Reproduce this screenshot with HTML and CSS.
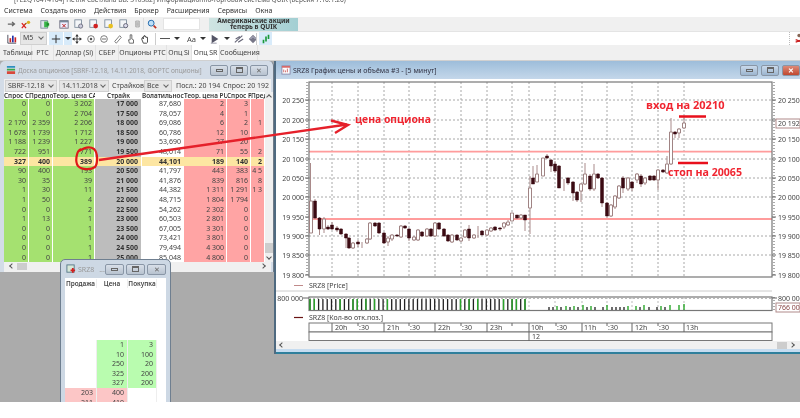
FILE: index.html
```html
<!DOCTYPE html>
<html lang="ru">
<head>
<meta charset="utf-8">
<title>QUIK</title>
<link rel="stylesheet" href="styles.css">
</head>
<body>
<div class="app">
  <div class="apptitle"><span>[FE2Q16414164] Петля Светлана BB. 310382] Информационно-торговая система QUIK (версия 7.16.1.26)</span></div>
  <nav class="menu"><span>Система</span><span>Создать окно</span><span>Действия</span><span>Брокер</span><span>Расширения</span><span>Сервисы</span><span>Окна</span></nav>

  <div class="tb tb1">
    <div class="tgroup g1">
      <svg class="ic" viewBox="0 0 12 12"><path d="M1 6h7M6 3.500 9 6 6 8.500" fill="none" stroke="#666" stroke-width="1.500"/></svg>
      <svg class="ic" viewBox="0 0 12 12"><path d="M1 5l5 6M6 5l-5 6" stroke="#d22" stroke-width="1.600"/><circle cx="9" cy="4" r="2" fill="#d8b020"/><path d="M7 5 4 7" stroke="#9a7a10"/></svg>
    </div>
    <div class="tgroup">
      <svg class="ic" viewBox="0 0 12 12"><rect x="1" y="2" width="8" height="9" fill="#dfe6ea" stroke="#789"/><path d="M5 3h5v7H5z" fill="#39b54a"/><path d="M8 5h3v3H8z" fill="#1a8a2a"/></svg>
    </div>
    <div class="tgroup g6">
      <svg class="ic" viewBox="0 0 12 12"><rect x="1" y="2" width="10" height="9" fill="#eef" stroke="#667"/><path d="M1 2h10v2H1z" fill="#789"/><path d="M4 6l4 4M8 6l-4 4" stroke="#b22" stroke-width="1.200"/></svg>
      <svg class="ic" viewBox="0 0 12 12"><rect x="1" y="1" width="8" height="9" fill="#f4f6f8" stroke="#789"/><circle cx="8" cy="8.500" r="2.500" fill="#ccd" stroke="#667"/></svg>
      <svg class="ic" viewBox="0 0 12 12"><rect x="1" y="1" width="8" height="9" fill="#f4f6f8" stroke="#789"/><circle cx="8" cy="8.500" r="2.800" fill="#d02020"/></svg>
      <svg class="ic" viewBox="0 0 12 12"><rect x="1" y="1" width="8" height="9" fill="#f4f6f8" stroke="#789"/><circle cx="8" cy="8.500" r="2.800" fill="#e8c020"/></svg>
      <svg class="ic" viewBox="0 0 12 12"><rect x="1" y="1" width="8" height="9" fill="#f4f6f8" stroke="#789"/><circle cx="8" cy="8" r="2.500" fill="#dde" stroke="#556"/></svg>
      <svg class="ic ic-n" viewBox="0 0 12 12"><path d="M3 1h6v10H3z" fill="#eee" stroke="#777"/><path d="M4 4h4M4 6h4M4 8h4" stroke="#777"/></svg>
    </div>
    <div class="tgroup g-s">
      <svg class="ic" viewBox="0 0 12 12"><circle cx="5" cy="5" r="3.500" fill="#bfe0f8" stroke="#2a6fb0" stroke-width="1.200"/><path d="M8 8l3 3" stroke="#c03020" stroke-width="2"/></svg>
      <div class="findbox"></div>
    </div>
    <div class="banner"><span>Американские акции</span><span>теперь в QUIK</span></div>
  </div>

  <div class="tb tb2">
    <svg class="ic chartic" viewBox="0 0 12 12"><path d="M1 1v10h10" fill="none" stroke="#334"/><rect x="3" y="5" width="2" height="5" fill="#c22"/><rect x="6" y="2" width="2" height="8" fill="#23a"/><rect x="9" y="4" width="2" height="6" fill="#c22"/></svg>
    <div class="combo small">M5<i class="chev"></i></div>
    <div class="hl cross"><svg class="ic" viewBox="0 0 12 12"><path d="M6 1v10M1 6h10" stroke="#333" stroke-width="1.200"/></svg></div>
    <div class="hl drop"><i class="tri"></i></div>
    <div class="tools">
      <svg class="ic" viewBox="0 0 12 12"><path d="M6 0 8 3H4zM6 12 4 9h4zM0 6l3-2v4zM12 6 9 4v4z" fill="#333"/><path d="M6 2v8M2 6h8" stroke="#333"/></svg>
      <svg class="ic" viewBox="0 0 12 12"><circle cx="6" cy="6" r="4" fill="none" stroke="#666"/><circle cx="6" cy="6" r="1.500" fill="#555"/></svg>
      <svg class="ic" viewBox="0 0 12 12"><circle cx="6" cy="6" r="4" fill="none" stroke="#666"/><path d="M3.500 6h5" stroke="#555"/></svg>
      <svg class="ic" viewBox="0 0 12 12"><path d="M2 9 8 2l2 2-6 7z" fill="#fff" stroke="#666"/></svg>
      <svg class="ic" viewBox="0 0 12 12"><path d="M5 1h2v5l2 1v4H4L3 7h2z" fill="#fff" stroke="#555"/></svg>
      <svg class="ic" viewBox="0 0 12 12"><path d="M2 6l1-2 1 2V3h1V2h1v1h1v1h2v6l-1 1H4z" fill="#fff" stroke="#333"/></svg>
    </div>
    <b class="sep"></b>
    <div class="tools2">
      <span class="dash"></span><i class="tri"></i>
      <span class="aa">Aa</span><i class="tri"></i>
      <svg class="ic" viewBox="0 0 12 12"><path d="M2 1l8 5-8 5z" fill="#556"/><path d="M1 11h7" stroke="#889"/></svg><i class="tri"></i>
      <svg class="ic" viewBox="0 0 12 12"><path d="M1 10 10 2M2 6l5-3M5 10l6-4" stroke="#667" stroke-width="1.400"/></svg>
      <svg class="ic" viewBox="0 0 12 12"><path d="M6 1l5 5-5 5-5-5z" fill="#778"/><path d="M3 6l3-3 3 3" fill="none" stroke="#ccd"/></svg>
    </div>
    <b class="sep"></b>
    <div class="hl greenbtn"><svg class="ic" viewBox="0 0 12 12"><path d="M2 7h2v4H2zM5 3h2v6H5zM8 1h2v5H8z" fill="#1c9a3a"/></svg></div>
    <div class="tb-end"><svg class="ic" viewBox="0 0 12 12"><circle cx="6" cy="3" r="2" fill="#865"/><path d="M2 8l8 3M10 8l-8 3" stroke="#c22" stroke-width="1.500"/></svg></div>
  </div>

  <div class="tabs">
    <span class="tab t1">Таблицы</span><span class="tab t2">РТС</span><span class="tab t3">Доллар (Si)</span><span class="tab t4">СБЕР</span><span class="tab t5">Опционы РТС</span><span class="tab t6">Опц Si</span><span class="tab on t7">Опц SR</span><span class="tab t8">Сообщения</span>
  </div>

  <main class="mdi">
    <section class="win boardwin">
      <header class="wtitle">
        <svg class="wic" viewBox="0 0 11 11"><path d="M1 1h9v2H1z" fill="#2d8fc0"/><path d="M1 4h9v2H1z" fill="#3aa648"/><path d="M1 7h9v3H1z" fill="#d8483a"/></svg>
        <span class="wname bname">Доска опционов [SBRF-12.18, 14.11.2018, ФОРТС опционы]</span>
        <div class="wbtns"><i class="wb"><u class="mn"></u></i><i class="wb"><u class="mx"></u></i><i class="wb"><u class="cl">✕</u></i></div>
      </header>
      <div class="boardbody">
        <div class="filters">
          <div class="combo c1">SBRF-12.18<i class="chev"></i></div>
          <div class="combo c2">14.11.2018<i class="chev"></i></div>
          <span class="lab lab-s">Страйков:</span>
          <div class="combo c3">Все<i class="chev"></i></div>
          <span class="lab lab-a">Посл.: 20 194</span>
          <span class="lab lab-b">Спрос: 20 192</span>
        </div>
        <div class="gridwrap">
          <div class="grid">
            <div class="row head"><span>Спрос С/</span><span>Предлож</span><span>Теор. цена CAL</span><span class="hc">Страйк</span><span>Волатильность</span><span>Теор. цена PUT</span><span>Спрос Р</span><span>Пред</span></div>
            <div class="row"><span>0</span><span>0</span><span>3 202</span><span>17 000</span><span>87,680</span><span>2</span><span>3</span><span></span></div>
            <div class="row"><span>0</span><span>0</span><span>2 704</span><span>17 500</span><span>78,057</span><span>4</span><span>1</span><span></span></div>
            <div class="row"><span>2 170</span><span>2 359</span><span>2 206</span><span>18 000</span><span>69,086</span><span>6</span><span>2</span><span>1</span></div>
            <div class="row"><span>1 678</span><span>1 739</span><span>1 712</span><span>18 500</span><span>60,786</span><span>12</span><span>10</span><span></span></div>
            <div class="row"><span>1 188</span><span>1 239</span><span>1 227</span><span>19 000</span><span>53,690</span><span>27</span><span>20</span><span></span></div>
            <div class="row"><span>722</span><span>951</span><span>771</span><span>19 500</span><span>48,014</span><span>71</span><span>55</span><span>2</span></div>
            <div class="row cur"><span>327</span><span>400</span><span>389</span><span>20 000</span><span>44,101</span><span>189</span><span>140</span><span>2</span></div>
            <div class="row"><span>90</span><span>400</span><span>193</span><span>20 500</span><span>41,797</span><span>443</span><span>383</span><span>4 5</span></div>
            <div class="row"><span>30</span><span>35</span><span>39</span><span>21 000</span><span>41,876</span><span>839</span><span>816</span><span>8</span></div>
            <div class="row"><span>1</span><span>30</span><span>11</span><span>21 500</span><span>44,382</span><span>1 311</span><span>1 291</span><span>1 3</span></div>
            <div class="row"><span>1</span><span>50</span><span>4</span><span>22 000</span><span>48,715</span><span>1 804</span><span>1 794</span><span></span></div>
            <div class="row"><span>0</span><span>0</span><span>2</span><span>22 500</span><span>54,262</span><span>2 302</span><span>0</span><span></span></div>
            <div class="row"><span>1</span><span>13</span><span>1</span><span>23 000</span><span>60,503</span><span>2 801</span><span>0</span><span></span></div>
            <div class="row"><span>0</span><span>0</span><span>1</span><span>23 500</span><span>67,005</span><span>3 301</span><span>0</span><span></span></div>
            <div class="row"><span>0</span><span>0</span><span>1</span><span>24 000</span><span>73,421</span><span>3 801</span><span>0</span><span></span></div>
            <div class="row"><span>0</span><span>0</span><span>1</span><span>24 500</span><span>79,494</span><span>4 300</span><span>0</span><span></span></div>
            <div class="row"><span>0</span><span>0</span><span>1</span><span>25 000</span><span>85,048</span><span>4 800</span><span>0</span><span></span></div>
          </div>
          <div class="vscroll"><i class="up"></i><i class="thumb"></i><i class="down"></i></div>
        </div>
        <div class="hscroll"><i class="left"></i><i class="hthumb"></i><i class="right"></i></div>
      </div>
    </section>

    <section class="win bookwin">
      <header class="wtitle btitle">
        <svg class="wic" viewBox="0 0 11 11"><rect x="1" y="1" width="8" height="8" fill="#d8e8d8" stroke="#578"/><path d="M5 7h5M7.500 4.500v5" stroke="#d02020" stroke-width="2"/></svg>
        <span class="wname">SRZ8</span><span class="wname more">...</span>
        <div class="wbtns"><i class="wb b2"><u class="mn"></u></i><i class="wb b2"><u class="mx"></u></i><i class="wb b2"><u class="cl">✕</u></i></div>
      </header>
      <div class="book">
        <div class="brow bhead"><span>Продажа</span><span>Цена</span><span>Покупка</span></div>
        <div class="bspace"></div>
        <div class="brow"><span></span><span class="g">1</span><span class="g">3</span></div>
        <div class="brow"><span></span><span class="g">10</span><span class="g">100</span></div>
        <div class="brow"><span></span><span class="g">250</span><span class="g">20</span></div>
        <div class="brow"><span></span><span class="g">325</span><span class="g">200</span></div>
        <div class="brow"><span></span><span class="g">327</span><span class="g">200</span></div>
        <div class="brow"><span class="p">203</span><span class="p">400</span><span></span></div>
        <div class="brow"><span class="p">211</span><span class="p">410</span><span></span></div>
      </div>
    </section>

    <section class="win chartwin">
      <header class="wtitle ctitle">
        <svg class="wic" viewBox="0 0 11 11"><rect x="1" y="1" width="9" height="9" fill="#fff" stroke="#88a"/><path d="M1 1h9v2H1z" fill="#d86a6a"/><path d="M3 8V5M5 8V6M7 8V4" stroke="#c66"/></svg>
        <span class="wname">SRZ8 График цены и объёма #3 - [5 минут]</span>
        <div class="wbtns cbtns"><i class="wb c"><u class="mn"></u></i><i class="wb c"><u class="mx"></u></i><i class="wb c close"><u class="cl">✕</u></i></div>
      </header>
      <svg class="plot" viewBox="276 78 524 262" width="524" height="262">
        <g class="grid-l">
          <path d="M309 99H772M309 119H772M309 138H772M309 158H772M309 177H772M309 196H772M309 235H772M309 254H772"/>
          <path d="M332 81V276M358 81V276M384 81V276M409 81V276M435 81V276M461 81V276M487 81V276M512 81V276M529 81V276M555 81V276M582 81V276M607 81V276M632 81V276M658 81V276M684 81V276"/>
        </g>
        <path class="level" d="M309 150.700H772M309 218H772"/>
        <rect class="frame" x="309" y="81" width="463" height="195"/>
        <path class="ticks" d="M307 81V276M774 81V276"/>
        <path class="tick2" d="M305 99h4M305 119h4M305 138h4M305 158h4M305 177h4M305 196h4M305 216h4M305 235h4M305 254h4M305 274h4M772 99h4M772 119h4M772 138h4M772 158h4M772 177h4M772 196h4M772 216h4M772 235h4M772 254h4M772 274h4"/>
        <g class="ylab">
          <text x="304" y="101.500">20 250</text><text x="304" y="121.500">20 200</text><text x="304" y="140.500">20 150</text><text x="304" y="160.500">20 100</text><text x="304" y="179.500">20 050</text><text x="304" y="198.500">20 000</text><text x="304" y="218.500">19 950</text><text x="304" y="237.500">19 900</text><text x="304" y="256.500">19 850</text><text x="304" y="276.500">19 800</text>
        </g>
        <g class="ylab r">
          <text x="778" y="101.500">20 250</text><text x="778" y="140.500">20 150</text><text x="778" y="160.500">20 100</text><text x="778" y="179.500">20 050</text><text x="778" y="198.500">20 000</text><text x="778" y="218.500">19 950</text><text x="778" y="237.500">19 900</text><text x="778" y="256.500">19 850</text><text x="778" y="276.500">19 800</text>
        </g>
        <rect class="pricebox" x="776" y="118" width="24" height="9"/>
        <text class="ybox" x="778" y="125">20 192</text>

        <path class="wick" d="M310.500 162V232M315 198V218M319.500 216V234M324 216V232M328 224V229M332 221V229M337 225V231M341 227V234M346 232V247M349 236V248M353 241V248M358 239V246M362 241V247M367 237V243M370 221V239M375 221V226M379 221V233M384 231V243M388 235V245M392 233V240M397 233V236M401 224V237M405 224V228M409 227V240M414 235V240M418 228V240M422 230V236M427 227V236M431 227V236M435 221V236M439 221V229M444 227V236M448 233V241M452 233V242M457 233V240M461 236V241M465 228V237M469 224V240M474 233V238M478 225V237M482 229V234M487 228V235M491 226V231M495 225V230M500 226V230M504 221V228M508 219V225M512 212V220M517 214V218M521 213V218M525 214V230M530 175V233M533 165V183M537 164V181M543 157V175M547 153V158M551 158V171M555 160V172M559 164V187M564 178V190M568 176V184M573 180V200M577 190V201M581 182V201M585 162V184M590 173V190M594 163V190M598 172V178M602 176V206M607 201V217M611 203V216M615 194V208M619 184V198M623 175V192M628 176V190M632 180V190M637 172V182M641 173V186M645 176V184M650 174V180M654 174V180M658 168V189M663 168V172M667 155V173M671 117V164M675 130V137M679 127V137M684 115V128"/>
        <path class="hollow" d="M309.500 200h3v32h-3zM322.500 218h3v10h-3zM351.500 242h3v5h-3zM365.500 238h3v4h-3zM368.500 222h3v16h-3zM386.500 237h3v4h-3zM390.500 234h3v4h-3zM399.500 225h3v11h-3zM412.500 236h3v3h-3zM416.500 229h3v10h-3zM425.500 228h3v7h-3zM433.500 222h3v13h-3zM450.500 234h3v7h-3zM459.500 237h3v3h-3zM463.500 229h3v7h-3zM472.500 234h3v3h-3zM485.500 229h3v5h-3zM489.500 227h3v3h-3zM502.500 222h3v4h-3zM506.500 221h3v3h-3zM510.500 212h3v8h-3zM519.500 214h3v3h-3zM528.500 187h3v20h-3zM535.500 173h3v8h-3zM541.500 157h3v18h-3zM579.500 183h3v7h-3zM583.500 173h3v10h-3zM592.500 173h3v15h-3zM609.500 204h3v11h-3zM613.500 195h3v11h-3zM617.500 185h3v12h-3zM626.500 177h3v11h-3zM635.500 173h3v6h-3zM643.500 177h3v5h-3zM656.500 169h3v10h-3zM665.500 163h3v9h-3zM669.500 131h3v32h-3zM677.500 128h3v4h-3zM682.500 122h3v5h-3z"/>
        <path class="dark" d="M313.500 200h3v17h-3zM318 217h3v11h-3zM326.500 226h3v2h-3zM330.500 224h3v4h-3zM335.500 227h3v2h-3zM339.500 228h3v5h-3zM344.500 233h3v4h-3zM347.500 237h3v10h-3zM356.500 241h3v2h-3zM373.500 222h3v3h-3zM377.500 222h3v10h-3zM382.500 232h3v10h-3zM395.500 234h3v1h-3zM403.500 225h3v2h-3zM407.500 228h3v9h-3zM420.500 231h3v4h-3zM429.500 228h3v7h-3zM437.500 222h3v6h-3zM442.500 228h3v7h-3zM446.500 234h3v6h-3zM455.500 234h3v5h-3zM467.500 228h3v9h-3zM480.500 230h3v4h-3zM493.500 226h3v3h-3zM498.500 227h3v1h-3zM515.500 214h3v3h-3zM523.500 214h3v5h-3zM531.500 177h3v6h-3zM545.500 155h3v2h-3zM549.500 159h3v6h-3zM553.500 163h3v7h-3zM557.500 165h3v22h-3zM566.500 177h3v5h-3zM571.500 181h3v11h-3zM575.500 191h3v8h-3zM588.500 175h3v13h-3zM596.500 173h3v4h-3zM600.500 177h3v25h-3zM605.500 202h3v13h-3zM621.500 177h3v10h-3zM630.500 181h3v6h-3zM639.500 175h3v8h-3zM648.500 175h3v4h-3zM652.500 175h3v4h-3zM661.500 169h3v2h-3zM673.500 131h3v2h-3z"/>

        <path class="sepl" d="M276 290H772"/>
        <g class="leg"><path class="l1" d="M294 284.500h9"/><text x="309" y="287">SRZ8 [Price]</text></g>
        <rect class="frame" x="309" y="296" width="463" height="13.500"/>
        <path class="grid-d" d="M332 296V309M358 296V309M384 296V309M409 296V309M435 296V309M461 296V309M487 296V309M512 296V309M529 296V309M555 296V309M582 296V309M607 296V309M632 296V309M658 296V309M684 296V309M309 297.500H772"/>
        <path class="vol" d="M310 298V309M314.300 298V309M318.600 298V309M322.900 298V309M327.200 298V309M331.500 298V309M335.800 298V309M340.100 298V309M344.400 298V309M348.700 298V309M353 298V309M357.300 298V309M361.600 298V309M365.900 298V309M370.200 298V309M374.500 298V309M378.800 298V309M383.100 298V309M387.400 298V309M391.700 298V309M396 298V309M400.300 298V309M404.600 298V309M408.900 298V309M413.200 298V309M417.500 298V309M421.800 298V309M426.100 298V309M430.400 298V309M434.700 298V309M439 298V309M443.300 298V309M447.600 298V309M451.900 298V309M456.200 298V309M460.500 298V309M464.800 298V309M469.100 298V309M473.400 298V309M477.700 298V309M482 298V309M486.300 298V309M490.600 298V309M494.900 298V309M499.200 298V309M503.500 298V309M507.800 298V309M512.100 298V309M516.400 298V309M520.700 298V309M525 298V309M549 306V309M553 306V309M561 306V309M570 306V309M578 306V309M587 306V309M595 306V309M603 306V309M612 306V309M616 306V309M620 306V309M624 306V309M640 306V309M649 306V309M657 306V309M665 306V309"/>
        <path class="volg" d="M310 298V309M314.300 298V309M340.100 298V309M353 298V309M357.300 298V309M365.900 298V309M374.500 298V309M387.400 298V309M460.500 298V309M469.100 298V309M477.700 298V309M503.500 298V309M512.100 298V309M516.400 298V309M525 298V309M557 305V309M566 305V309M574 305V309M583 304V309M591 305V309M607 304V309M628 305V309M636 305V309M644 304V309M661 305V309M670 304V309M679 304V309M684 303V309"/>
        <text class="volt" x="303" y="300">800 000</text>
        <path class="tick2" d="M303 297h6M772 297h5"/>
        <path class="ticks" d="M774 296V309"/>
        <text class="ylab2" x="778" y="300">800 000</text>
        <rect class="pricebox vb" x="776" y="302" width="24" height="9"/>
        <text class="ybox vt" x="778" y="309">766 000</text>
        <g class="leg"><path class="l2" d="M294 316.500h9"/><text x="309" y="319">SRZ8 [Кол-во отк.поз.]</text></g>

        <rect class="axis" x="309" y="322" width="463" height="9"/>
        <rect class="axis" x="309" y="331" width="463" height="8.500"/>
        <path class="axsep" d="M332 322v9M384 322v9M435 322v9M487 322v9M529 322v18M582 322v9M632 322v9M684 322v9"/>
        <path class="axtick" d="M358 322v3M409 322v3M461 322v3M512 322v3M556 322v3M607 322v3M658 322v3"/>
        <g class="tlab">
          <text x="335" y="329">20h</text><text x="359" y="329">:30</text><text x="387" y="329">21h</text><text x="410" y="329">:30</text><text x="438" y="329">22h</text><text x="462" y="329">:30</text><text x="490" y="329">23h</text><text x="531" y="329">10h</text><text x="557" y="329">:30</text><text x="584" y="329">11h</text><text x="608" y="329">:30</text><text x="635" y="329">12h</text><text x="659" y="329">:30</text><text x="686" y="329">13h</text><text x="532" y="338">12</text>
        </g>
      </svg>
      <div class="chartscroll"><i class="left"></i><i class="hthumb2"></i><i class="right"></i></div>
    </section>
  </main>
  <div class="foot"></div>

  <svg class="notes" viewBox="0 0 800 418" width="800" height="418">
    <path class="ring" d="M81 149C76 151 75 162 78 166 82 170 91 170 95 167 98 163 98 153 94 149 90 146 85 147 79 151"/>
    <path class="arrow" d="M99 160 347 124.500M331 120.500 348 125 335 133"/>
    <text class="note" x="355" y="123">цена опциона</text>
    <text class="note n2" x="646" y="109">вход на 20210</text>
    <text class="note n3" x="668" y="175.500">стоп на 20065</text>
    <path class="mark" d="M679 116.500h27M678 163h30"/>
  </svg>
</div>
</body>
</html>
```
FILE: styles.css
```css
* { box-sizing: border-box; }
html, body { margin: 0; padding: 0; background: #fff; }
body { font-family: "Noto Sans", "Open Sans", sans-serif; color: #333; }

.app { width: 800px; height: 418px; overflow: hidden; position: relative; display: flex; flex-direction: column; filter: blur(0.55px); background: #fff; }

.apptitle { height: 4px; overflow: hidden; position: relative; font-size: 6.600px; line-height: 8px; color: #555; }
.apptitle span { position: absolute; left: 14px; top: -4px; white-space: nowrap; }

.menu { height: 13px; display: flex; gap: 8px; padding-left: 4px; font-size: 7px; line-height: 13px; color: #333; align-items: center; flex: none; }

.tb { display: flex; align-items: center; flex: none; }
.tb1 { height: 15px; background: #f0f0f0; padding-left: 7px; border-bottom: 1px solid #e4e4e4; }
.tb2 { height: 13px; background: #fff; padding-left: 7px; position: relative; }
.ic { width: 10px; height: 10px; flex: none; display: block; }
.ic-n { width: 7px; }
.tgroup { display: flex; gap: 4px; align-items: center; padding-right: 9px; }
.g6 { gap: 5px; padding-right: 2px; }
.g-s { gap: 6px; border-left: 1px solid #ddd; padding-left: 3px; padding-right: 0; }
.findbox { width: 37px; height: 12px; background: #fff; border: 1px solid #e4e4e4; }
.banner { margin-left: 9px; width: 89px; height: 13px; background: linear-gradient(90deg, #cfe4e2, #a3cfd3); display: flex; flex-direction: column; align-items: center; font-size: 6.500px; line-height: 6.500px; font-weight: 700; color: #333; }

.chartic { margin-right: 3px; }
.combo { height: 12px; background: #e6e6e6; border: 1px solid #d0d0d0; font-size: 7px; line-height: 10px; padding-left: 2px; position: relative; color: #444; flex: none; }
.combo.small { width: 27px; height: 13px; }
.chev { position: absolute; right: 3px; top: 2px; width: 4px; height: 4px; border-right: 1px solid #666; border-bottom: 1px solid #666; transform: rotate(45deg); }
.hl { background: #d8ebfa; height: 13px; display: flex; align-items: center; justify-content: center; flex: none; }
.cross { width: 14px; margin-left: 2px; }
.drop { width: 8px; margin-left: 1px; }
.tri { display: block; width: 0; height: 0; border-left: 3px solid transparent; border-right: 3px solid transparent; border-top: 3px solid #333; flex: none; }
.tools { display: flex; gap: 3.500px; width: 80px; flex: none; }
.sep { width: 1px; height: 12px; background: #ccc; margin: 0 4px 0 3px; flex: none; }
.tools2 { display: flex; align-items: center; gap: 4px; width: 93px; flex: none; }
.dash { width: 10px; height: 1px; background: #555; flex: none; }
.aa { font-size: 7.500px; color: #444; margin-left: 3px; }
.greenbtn { width: 13px; margin-left: -2px; }
.tb-end { position: absolute; left: 789px; top: 0; height: 13px; width: 20px; border-left: 1px dotted #bbb; padding: 1px 0 0 4px; }

.tabs { height: 15px; background: #f0f0f0; display: flex; font-size: 7px; line-height: 15px; padding-left: 3px; flex: none; }
.tab { flex: none; white-space: nowrap; border-right: 1px solid #e2e2e2; text-align: center; color: #444; }
.tab.on { background: #fff; }
.t1 { width: 29px; } .t2 { width: 22px; } .t3 { width: 42px; } .t4 { width: 23px; } .t5 { width: 48px; } .t6 { width: 25px; } .t7 { width: 28px; } .t8 { width: 38px; }

.mdi { height: 342px; background: #ababab; position: relative; overflow: hidden; border-top: 1px solid #d0d0d0; flex: none; }
.foot { flex: 1; background: #fff; }

.win { position: absolute; display: flex; flex-direction: column; overflow: hidden; }
.wtitle { display: flex; align-items: center; flex: none; font-size: 7px; white-space: nowrap; }
.wic { width: 10px; height: 10px; flex: none; }
.wname { color: #999; margin-left: 2px; }
.bname { font-size: 6.500px; }
.wbtns { margin-left: auto; display: flex; gap: 2px; }
.wb { width: 18px; height: 11px; background: linear-gradient(#d8dfe8, #b7c2cf); border: 1px solid #8996a6; border-radius: 2px; display: flex; align-items: center; justify-content: center; font-style: normal; }
.wb u { text-decoration: none; display: block; }
.mn { width: 7px; height: 3px; border: 1px solid #666; }
.mx { width: 7px; height: 6px; border: 1px solid #666; border-top-width: 2px; }
.cl { font-size: 7px; line-height: 7px; color: #666; }

.boardwin { left: 0; top: 0; width: 274px; height: 211px; background: #d3dce7; border-right: 1px solid #6f7b88; padding: 0 2px 0 4px; border-radius: 5px 5px 0 0; }
.boardwin .wtitle { height: 18px; padding-left: 2px; padding-right: 3px; }
.boardbody { flex: 1; display: flex; flex-direction: column; background: #f0f0f0; min-height: 0; }
.filters { height: 13px; flex: none; display: flex; align-items: center; padding-left: 1px; font-size: 7px; color: #444; white-space: nowrap; }
.c1 { width: 52px; }
.c2 { width: 50px; margin-left: 2px; }
.c3 { width: 28px; margin-left: 1px; }
.lab { flex: none; }
.lab-s { margin-left: 3px; width: 31px; }
.lab-a { margin-left: 4px; width: 43px; }
.lab-b { margin-left: 4px; }
.gridwrap { display: flex; flex: none; height: 170px; background: #fff; }
.grid { width: 261px; flex: none; overflow: hidden; }
.row { display: grid; grid-template-columns: 25px 24px 42px 47px 42px 43px 24px 14px; height: 9.600px; font-size: 7px; line-height: 9.600px; color: #444; }
.row span { text-align: right; padding-right: 2px; white-space: nowrap; overflow: hidden; border-right: 1px solid #fff; }
.row span:nth-child(-n+3) { background: #a5e170; }
.row span:nth-child(4) { background: #bdbdbd; font-weight: 700; color: #333; padding-right: 3px; }
.row span:nth-child(5) { background: #fff; border-right: 0; padding-right: 3px; }
.row span:nth-child(n+6) { background: #ffa4a4; }
.row.head { height: 7px; line-height: 7px; font-size: 6.400px; font-weight: 700; }
.row.head span, .row.head span:nth-child(n) { background: #fff; text-align: left; padding: 0; color: #333; overflow: hidden; font-weight: 600; border-right: 0; }
.row.head .hc, .row.head span.hc:nth-child(n) { text-align: center; }
.row.cur span, .row.cur span:nth-child(n) { background: #fde6a2; font-weight: 700; color: #333; }
.vscroll { flex: 1; background: #f0f0f0; position: relative; display: flex; flex-direction: column; justify-content: space-between; align-items: center; padding: 1px 0; }
.up, .down { width: 4px; height: 4px; border-left: 1px solid #555; border-top: 1px solid #555; display: block; margin-top: 2px; }
.up { transform: rotate(45deg); }
.down { transform: rotate(225deg); margin: 0 0 2px; }
.thumb { width: 8px; height: 10px; background: #cdcdcd; margin-top: 142px; display: block; }
.hscroll { height: 8px; background: #f0f0f0; display: flex; align-items: center; padding: 0 6px 0 6px; flex: none; }
.hthumb { width: 10px; height: 7px; background: #cdcdcd; margin-left: 3px; display: block; }
.left, .right { width: 4px; height: 4px; border-left: 1px solid #555; border-bottom: 1px solid #555; display: block; transform: rotate(45deg); flex: none; }
.right { transform: rotate(225deg); margin-left: auto; }

.bookwin { left: 60px; top: 198px; width: 111px; height: 160px; background: #cdd8e4; border: 1px solid #6f7f90; border-radius: 5px 5px 0 0; padding: 0 4px 0 4px; }
.btitle { height: 18px; padding-left: 1px; }
.btitle .wbtns { gap: 2px; }
.b2 { width: 19px; }
.more { margin-left: 5px; }
.book { background: #fff; flex: 1; }
.brow { display: grid; grid-template-columns: 32px 31px 29px 1fr; height: 9.600px; font-size: 7px; line-height: 9.600px; color: #444; }
.brow span { text-align: right; padding-right: 3px; border-right: 1px solid #eee; }
.bhead { height: 9px; font-size: 6.400px; font-weight: 600; line-height: 9px; margin-top: 1px; }
.bhead span { text-align: center; padding: 0; }
.bspace { height: 52px; }
.g { background: #b9fcaf; }
.p { background: #fcc6c6; }

.chartwin { left: 274px; top: 0; width: 528px; height: 293px; background: linear-gradient(#9dbdda, #c4d7ea 18px, #fff 18px); border-left: 2px solid #4f6a80; }
.ctitle { height: 18px; padding-left: 5px; padding-right: 2px; }
.ctitle .wname { color: #334; }
.cbtns { gap: 3px; }
.c { width: 18px; background: linear-gradient(#c9d9ea, #9cb5cf); }
.close { background: linear-gradient(#dd8a78, #c04830); }
.close .cl { color: #fff; font-weight: 700; }
.plot { display: block; flex: none; background: #fff; }
.chartscroll { height: 8px; background: #f0f0f0; display: flex; align-items: center; padding: 0 8px 0 4px; flex: none; }
.hthumb2 { width: 10px; height: 7px; background: #cdcdcd; margin-left: auto; display: block; }
.chartscroll .right { margin-left: 3px; }
.chartwin::after { content: ""; display: block; flex: 1; background: linear-gradient(#c6dcf0, #c6dcf0 3px, #2f7f9c 3px); }

.grid-l path { fill: none; stroke: #a8a8a8; stroke-width: 1; stroke-dasharray: 2 2; }
.grid-d { fill: none; stroke: #bbb; stroke-width: 1; stroke-dasharray: 2 2; }
.level { fill: none; stroke: #ff9c9c; stroke-width: 1.800; }
.frame { fill: none; stroke: #777; stroke-width: 1.200; }
.ticks { fill: none; stroke: #555; stroke-dasharray: 1 2; }
.tick2 { fill: none; stroke: #666; }
.ylab text { font-size: 7px; fill: #444; text-anchor: end; }
.ylab.r text { text-anchor: start; }
.ylab2, .volt { font-size: 7px; fill: #444; }
.volt { text-anchor: end; }
.ybox { font-size: 7px; fill: #444; }
.vt { fill: #844; }
.pricebox { fill: #fff; stroke: #b08a8a; }
.wick { fill: none; stroke: #a98a8a; stroke-width: 1; }
.hollow { fill: #fff; stroke: #a08484; stroke-width: 1; }
.dark { fill: #3b0a12; stroke: #3b0a12; stroke-width: 0.500; }
.sepl { stroke: #ccc; fill: none; }
.leg text { font-size: 7px; fill: #444; }
.l1 { stroke: #c08a8a; stroke-width: 1; fill: none; }
.l2 { stroke: #6a1414; stroke-width: 1.200; fill: none; }
.vol { stroke: #222; stroke-width: 1.300; fill: none; }
.volg { stroke: #2aa52a; stroke-width: 1.400; fill: none; }
.axis { fill: #fff; stroke: #777; }
.axsep { stroke: #666; fill: none; }
.axtick { stroke: #666; fill: none; }
.tlab text { font-size: 7px; fill: #444; }

.notes { position: absolute; left: 0; top: 0; pointer-events: none; }
.ring { fill: none; stroke: #e01818; stroke-width: 2.200; }
.arrow { fill: none; stroke: #e5202a; stroke-width: 2.400; }
.note { font-size: 10.300px; font-weight: 700; fill: #f02530; font-family: "Open Sans", sans-serif; }
.n2 { font-size: 11px; }
.n3 { font-size: 10.600px; }
.mark { fill: none; stroke: #e8101c; stroke-width: 2.400; }
```
